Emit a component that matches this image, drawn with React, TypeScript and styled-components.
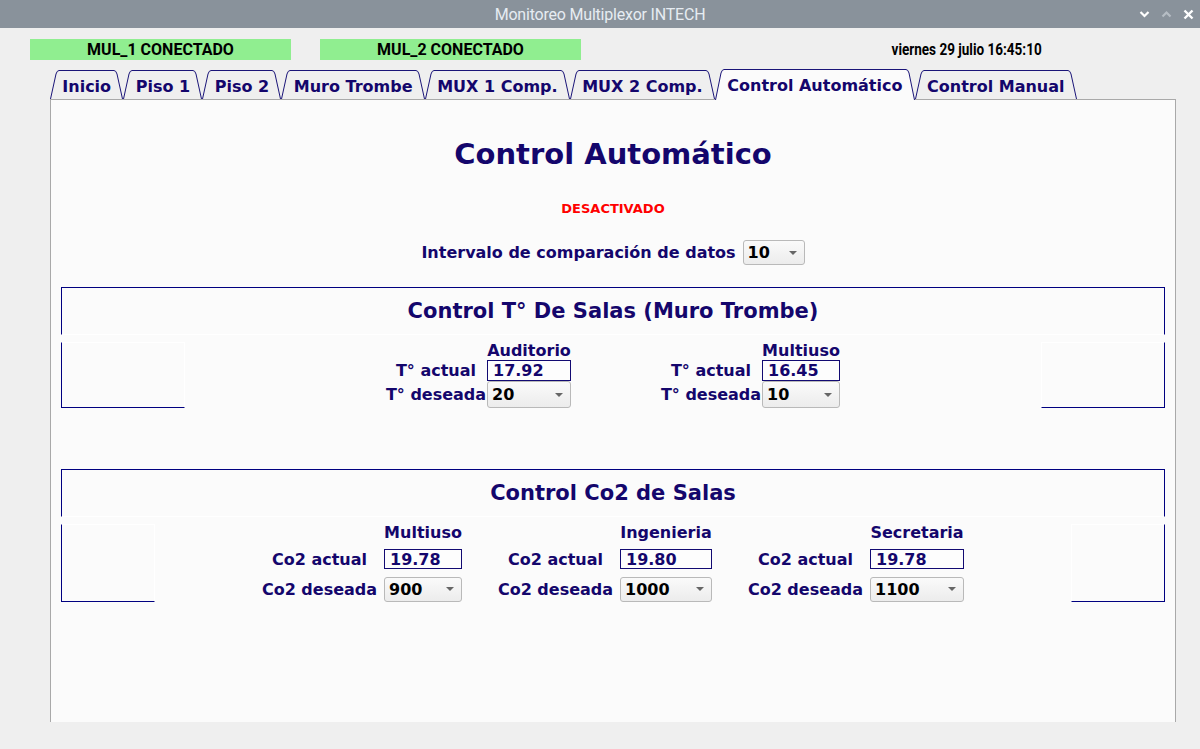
import React from 'react';
import styled, { createGlobalStyle } from 'styled-components';

const NAVY_TEXT = '#14066c';
const FRAME = '#000080';

const GlobalStyle = createGlobalStyle`
  html, body {
    margin: 0;
    padding: 0;
    background: #efefef;
  }
  * { box-sizing: border-box; }
`;

const Window = styled.div`
  width: 1200px;
  height: 749px;
  background: #efefef;
  display: flex;
  flex-direction: column;
  overflow: hidden;
`;

const TitleBar = styled.div`
  height: 28px;
  background: #89929b;
  display: flex;
  align-items: center;
  justify-content: center;
  position: relative;
  color: #e6ecf2;
  font-family: Roboto, 'Liberation Sans', sans-serif;
  font-size: 16px;
  letter-spacing: -0.2px;
`;

const WinButtons = styled.div`
  position: absolute;
  right: 6px;
  top: 0;
  height: 28px;
  display: flex;
  align-items: center;
  gap: 11px;
`;

const StatusRow = styled.div`
  display: flex;
  align-items: center;
  margin-top: 11px;
  padding: 0 158px 0 30px;
  height: 21px;
`;

const StatusBadge = styled.div`
  width: 261px;
  height: 21px;
  background: #90ee90;
  display: flex;
  align-items: center;
  justify-content: center;
  font-family: Roboto, 'Liberation Sans', sans-serif;
  font-weight: 700;
  font-size: 16px;
  color: #000;
  & + & { margin-left: 29px; }
`;

const Clock = styled.div`
  margin-left: auto;
  font-family: Roboto, 'Liberation Sans', sans-serif;
  font-weight: 700;
  font-size: 16px;
  color: #000;
  transform: scaleX(0.845);
  transform-origin: right center;
  white-space: nowrap;
`;

const TabStrip = styled.div`
  display: flex;
  align-items: flex-end;
  height: 31px;
  margin: 8px 0 0 50px;
  position: relative;
  z-index: 2;
`;

const TabItem = styled.div<{ $active?: boolean }>`
  display: flex;
  height: ${p => (p.$active ? 31 : 29)}px;
  margin-bottom: ${p => (p.$active ? -1 : 0)}px;
`;

const TabBody = styled.div<{ $active?: boolean }>`
  border-top: 1px solid #1a1478;
  background: ${p => (p.$active ? '#fbfbfb' : '#efefef')};
  padding: 0 3.3px;
  display: flex;
  align-items: center;
  padding-top: ${p => (p.$active ? 0 : 2)}px;
  font-family: 'DejaVu Sans', Verdana, sans-serif;
  font-weight: 700;
  font-size: 16px;
  color: ${NAVY_TEXT};
  white-space: nowrap;
`;

const Panel = styled.div`
  width: 1126px;
  height: 623px;
  margin-left: 50px;
  background: #fbfbfb;
  border: 1px solid #a9a9a9;
  border-bottom: none;
  padding: 0 10px;
  display: flex;
  flex-direction: column;
  align-items: stretch;
`;

const Heading = styled.h1`
  margin: 37px 0 0;
  text-align: center;
  font-family: 'DejaVu Sans', Verdana, sans-serif;
  font-weight: 700;
  font-size: 29px;
  line-height: 34px;
  color: ${NAVY_TEXT};
`;

const StateText = styled.div`
  margin-top: 30px;
  text-align: center;
  font-family: 'DejaVu Sans', Verdana, sans-serif;
  font-weight: 700;
  font-size: 13px;
  line-height: 16px;
  color: #ff0000;
`;

const IntervalRow = styled.div`
  margin-top: 23px;
  display: flex;
  justify-content: center;
  align-items: center;
  gap: 7px;
  height: 25px;
`;

const Label = styled.span`
  font-family: 'DejaVu Sans', Verdana, sans-serif;
  font-weight: 700;
  font-size: 16px;
  color: ${NAVY_TEXT};
  white-space: nowrap;
`;

const ComboBox = styled.div<{ $w: number; $h: number }>`
  width: ${p => p.$w}px;
  height: ${p => p.$h}px;
  border: 1px solid #b9b9b9;
  border-radius: 3px;
  background: linear-gradient(#fafafa, #ececec);
  display: flex;
  align-items: center;
  padding-left: 4px;
  font-family: 'DejaVu Sans', Verdana, sans-serif;
  font-weight: 700;
  font-size: 16px;
  color: #000;
`;

const ComboArrow = styled.span`
  margin-left: auto;
  margin-right: 7px;
  width: 0;
  height: 0;
  border-left: 4px solid transparent;
  border-right: 4px solid transparent;
  border-top: 4px solid #666;
`;

const Entry = styled.div<{ $h: number }>`
  width: 100%;
  height: ${p => p.$h}px;
  border: 1px solid #120a72;
  background: #fdfdfd;
  display: flex;
  align-items: center;
  padding-left: 5px;
  font-family: 'DejaVu Sans', Verdana, sans-serif;
  font-weight: 700;
  font-size: 16px;
  color: ${NAVY_TEXT};
`;

const Section = styled.section<{ $mt: number }>`
  margin-top: ${p => p.$mt}px;
`;

const SectionHead = styled.div`
  height: 48px;
  border: 1px solid ${FRAME};
  border-bottom-color: #ffffff;
  display: flex;
  align-items: center;
  justify-content: center;
  font-family: 'DejaVu Sans', Verdana, sans-serif;
  font-weight: 700;
  font-size: 21px;
  color: ${NAVY_TEXT};
`;

const SectionBody = styled.div<{ $h: number }>`
  margin-top: 7px;
  height: ${p => p.$h}px;
  display: flex;
`;

const SideBox = styled.div<{ $side: 'left' | 'right'; $w: number }>`
  width: ${p => p.$w}px;
  height: 100%;
  border: 1px solid #ffffff;
  border-bottom-color: ${FRAME};
  ${p => (p.$side === 'left' ? `border-left-color: ${FRAME};` : `border-right-color: ${FRAME};`)}
`;

const Center = styled.div<{ $gap: number }>`
  flex: 1;
  display: flex;
  justify-content: center;
  gap: ${p => p.$gap}px;
`;

const RoomGroup = styled.div<{ $labelW: number; $valueW: number; $colGap: number; $rows: string; $rowGap: number }>`
  display: grid;
  grid-template-columns: ${p => p.$labelW}px ${p => p.$valueW}px;
  grid-template-rows: ${p => p.$rows};
  column-gap: ${p => p.$colGap}px;
  row-gap: ${p => p.$rowGap}px;
  align-items: center;
  justify-items: center;
`;

const RoomName = styled(Label)`
  grid-column: 2;
  line-height: 18px;
`;

const FieldLabel = styled(Label)`
  grid-column: 1;
`;

const ValueCell = styled.div`
  grid-column: 2;
  width: 100%;
`;

const Chevron: React.FC<{ up?: boolean; color: string }> = ({ up, color }) => (
  <svg width="11" height="8" viewBox="0 0 11 8">
    <path d={up ? 'M1.5 6.5 L5.5 2.5 L9.5 6.5' : 'M1.5 2 L5.5 6 L9.5 2'} fill="none" stroke={color} strokeWidth="2.2" />
  </svg>
);

const Slant: React.FC<{ side: 'left' | 'right'; h: number; fill: string }> = ({ side, h, fill }) => {
  const w = 9;
  const shape = side === 'left'
    ? `M0.5 ${h} L6 4 Q7 0.5 9 0.5 L9 ${h} Z`
    : `M8.5 ${h} L3 4 Q2 0.5 0 0.5 L0 ${h} Z`;
  const edge = side === 'left'
    ? `M0.5 ${h} L6 4 Q7 0.5 9 0.5`
    : `M8.5 ${h} L3 4 Q2 0.5 0 0.5`;
  return (
    <svg width={w} height={h} viewBox={`0 0 ${w} ${h}`} style={{ display: 'block' }}>
      <path d={shape} fill={fill} />
      <path d={edge} fill="none" stroke="#1a1478" strokeWidth="1" />
    </svg>
  );
};

const tabs = ['Inicio', 'Piso 1', 'Piso 2', 'Muro Trombe', 'MUX 1 Comp.', 'MUX 2 Comp.', 'Control Automático', 'Control Manual'];
const activeTab = 'Control Automático';

const Combo: React.FC<{ value: string; w: number; h: number }> = ({ value, w, h }) => (
  <ComboBox $w={w} $h={h}>
    {value}
    <ComboArrow />
  </ComboBox>
);

type Room = { name: string; actual: string; desired: string; valueW: number };

const salas: Room[] = [
  { name: 'Auditorio', actual: '17.92', desired: '20', valueW: 84 },
  { name: 'Multiuso', actual: '16.45', desired: '10', valueW: 78 },
];

const co2Rooms: Room[] = [
  { name: 'Multiuso', actual: '19.78', desired: '900', valueW: 78 },
  { name: 'Ingenieria', actual: '19.80', desired: '1000', valueW: 92 },
  { name: 'Secretaria', actual: '19.78', desired: '1100', valueW: 94 },
];

const App: React.FC = () => {
  return (
    <Window>
      <GlobalStyle />
      <TitleBar>
        Monitoreo Multiplexor INTECH
        <WinButtons>
          <Chevron color="#ffffff" />
          <Chevron up color="#b6bdc4" />
          <svg width="11" height="11" viewBox="0 0 11 11">
            <path d="M1.5 1.5 L9.5 9.5 M9.5 1.5 L1.5 9.5" stroke="#ffffff" strokeWidth="2.4" />
          </svg>
        </WinButtons>
      </TitleBar>

      <StatusRow>
        <StatusBadge>MUL_1 CONECTADO</StatusBadge>
        <StatusBadge>MUL_2 CONECTADO</StatusBadge>
        <Clock>viernes 29 julio 16:45:10</Clock>
      </StatusRow>

      <TabStrip>
        {tabs.map(t => {
          const active = t === activeTab;
          const h = active ? 31 : 29;
          const fill = active ? '#fbfbfb' : '#efefef';
          return (
            <TabItem key={t} $active={active}>
              <Slant side="left" h={h} fill={fill} />
              <TabBody $active={active}>{t}</TabBody>
              <Slant side="right" h={h} fill={fill} />
            </TabItem>
          );
        })}
      </TabStrip>

      <Panel>
        <Heading>Control Automático</Heading>
        <StateText>DESACTIVADO</StateText>
        <IntervalRow>
          <Label>Intervalo de comparación de datos</Label>
          <Combo value="10" w={62} h={25} />
        </IntervalRow>

        <Section $mt={22}>
          <SectionHead>Control T° De Salas (Muro Trombe)</SectionHead>
          <SectionBody $h={66}>
            <SideBox $side="left" $w={124} />
            <Center $gap={90}>
              {salas.map(r => (
                <RoomGroup key={r.name} $labelW={100} $valueW={r.valueW} $colGap={1} $rows="18px 21px 27px" $rowGap={0}>
                  <RoomName>{r.name}</RoomName>
                  <FieldLabel>T° actual</FieldLabel>
                  <ValueCell><Entry $h={21}>{r.actual}</Entry></ValueCell>
                  <FieldLabel>T° deseada</FieldLabel>
                  <ValueCell><Combo value={r.desired} w={r.valueW} h={27} /></ValueCell>
                </RoomGroup>
              ))}
            </Center>
            <SideBox $side="right" $w={124} />
          </SectionBody>
        </Section>

        <Section $mt={61}>
          <SectionHead>Control Co2 de Salas</SectionHead>
          <SectionBody $h={78}>
            <SideBox $side="left" $w={94} />
            <Center $gap={36}>
              {co2Rooms.map(r => (
                <RoomGroup key={r.name} $labelW={115} $valueW={r.valueW} $colGap={7} $rows="18px 22px 26px" $rowGap={6}>
                  <RoomName>{r.name}</RoomName>
                  <FieldLabel>Co2 actual</FieldLabel>
                  <ValueCell><Entry $h={20}>{r.actual}</Entry></ValueCell>
                  <FieldLabel>Co2 deseada</FieldLabel>
                  <ValueCell><Combo value={r.desired} w={r.valueW} h={25} /></ValueCell>
                </RoomGroup>
              ))}
            </Center>
            <SideBox $side="right" $w={94} />
          </SectionBody>
        </Section>
      </Panel>
    </Window>
  );
};

export default App;
